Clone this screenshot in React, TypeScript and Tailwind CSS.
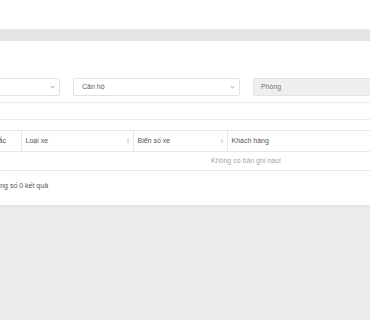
import React from "react";

function Chevron() {
  return (
    <svg width="5" height="4" viewBox="0 0 5 4" className="shrink-0">
      <path d="M0.6 1 L2.5 2.9 L4.4 1" fill="none" stroke="#8a8a8a" strokeWidth="0.8" />
    </svg>
  );
}

function SortIcon() {
  return (
    <svg width="4" height="6" viewBox="0 0 4 6" className="shrink-0">
      <path d="M2 0.4 L3.6 2.4 L0.4 2.4 Z" fill="#d0d0d0" />
      <path d="M2 5.6 L3.6 3.6 L0.4 3.6 Z" fill="#d0d0d0" />
    </svg>
  );
}

function Select({ label }: { label?: string }) {
  return (
    <div className="w-[167px] h-[18px] shrink-0 flex items-center justify-between pl-[8px] pr-[4px] border border-[#e2e2e2] rounded-[2px] bg-white text-[#555]">
      <span>{label}</span>
      <Chevron />
    </div>
  );
}

export default function App() {
  const cols = [
    { name: "", w: "w-[82px]", sort: false },
    { name: "Màu sắc", w: "w-[46px]", sort: false },
    { name: "Loại xe", w: "w-[112px]", sort: true },
    { name: "Biển số xe", w: "w-[94px]", sort: true },
    { name: "Khách hàng", w: "w-[243px]", sort: false },
    { name: "", w: "w-[129px]", sort: false },
  ];

  return (
    <div className="w-[370px] h-[320px] overflow-hidden bg-[#ebebeb] font-['Liberation_Sans',Arial,sans-serif] text-[7px] leading-[8px]">
      <div className="h-[29px] bg-white" />
      <div className="h-[12px] bg-[#e4e4e4] border-t border-[#eaeaea]" />
      <div className="h-[164px] bg-white pt-[37px] shadow-[0_1px_2px_rgba(0,0,0,0.06)]">
        {/* filters */}
        <div className="flex gap-[13px] -ml-[107px]">
          <Select />
          <Select label="Căn hộ" />
          <div className="w-[167px] h-[18px] shrink-0 flex items-center pl-[7px] border border-[#e2e2e2] rounded-[2px] bg-[#efefef] text-[#777]">
            Phòng
          </div>
        </div>

        {/* search */}
        <div className="mt-[6px] h-[18px] w-[706px] -ml-[107px] border border-[#ececec] rounded-[2px]" />

        {/* table */}
        <table className="mt-[10px] -ml-[107px] w-[706px] table-fixed border-collapse">
          <thead>
            <tr className="h-[21px] border-y border-[#e8e8e8]">
              {cols.map((c, i) => (
                <th key={i} className={`${c.w} p-0 font-normal text-left text-[#555] ${i > 0 ? "border-l border-[#e8e8e8]" : ""}`}>
                  <div className="flex items-center justify-between pl-[4px] pr-[3px]">
                    <span>{c.name}</span>
                    {c.sort && <SortIcon />}
                  </div>
                </th>
              ))}
            </tr>
          </thead>
          <tbody>
            <tr className="h-[19px] border-b border-[#e8e8e8]">
              <td colSpan={6} className="p-0 text-center text-[#a6a6a6]">
                Không có bản ghi nào!
              </td>
            </tr>
          </tbody>
        </table>

        {/* footer */}
        <div className="mt-[11px] -ml-[8px] text-[#555]">Tổng số 0 kết quả</div>
      </div>
    </div>
  );
}
